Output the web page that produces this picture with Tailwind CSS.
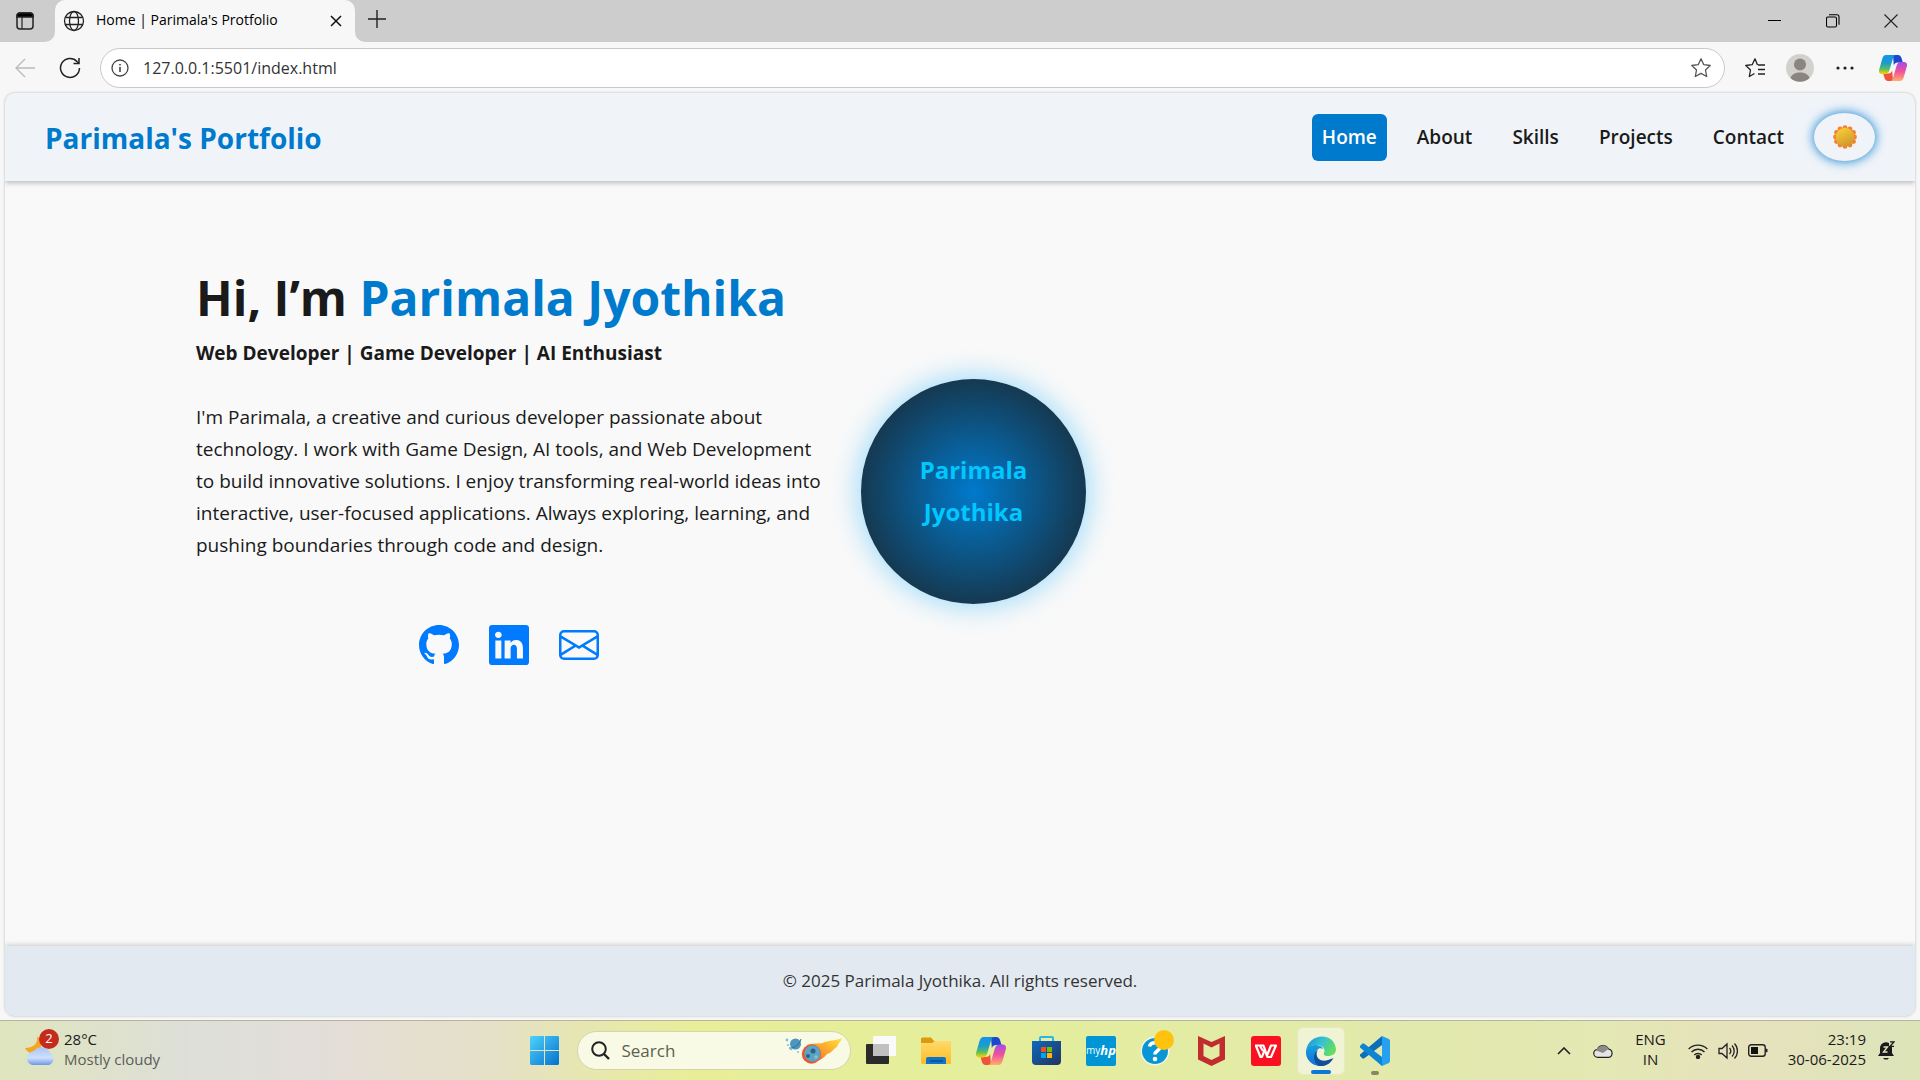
<!DOCTYPE html>
<html lang="en">
<head>
<meta charset="utf-8">
<title>Home | Parimala's Protfolio</title>
<script src="https://cdn.jsdelivr.net/npm/@tailwindcss/browser@4"></script>
</head>
<body class="flex min-h-screen flex-col overflow-hidden bg-[#f7f7f7] font-['Open_Sans',sans-serif] text-[#1a1a1a]">

<svg class="absolute h-0 w-0" aria-hidden="true">
  <defs>
    <linearGradient id="cpA" x1="0" y1="0" x2="0" y2="1"><stop offset="0" stop-color="#1690f0"/><stop offset=".45" stop-color="#1a9fc8"/><stop offset=".75" stop-color="#5fc05a"/><stop offset="1" stop-color="#ffd400"/></linearGradient>
    <linearGradient id="cpB" x1="0" y1="0" x2="0" y2="1"><stop offset="0" stop-color="#a34be8"/><stop offset=".5" stop-color="#f0529c"/><stop offset="1" stop-color="#ffae6b"/></linearGradient>
    <linearGradient id="win" gradientUnits="userSpaceOnUse" x1="0" y1="0" x2="29" y2="29"><stop offset="0" stop-color="#4fd3fb"/><stop offset="1" stop-color="#0471d0"/></linearGradient>
    <linearGradient id="sun" x1="0" y1="0" x2="0.5" y2="1"><stop offset="0" stop-color="#ffd43a"/><stop offset="1" stop-color="#d19a2c"/></linearGradient>
    <linearGradient id="fold" x1="0" y1="0" x2="0" y2="1"><stop offset="0" stop-color="#ffda6b"/><stop offset="1" stop-color="#fdbc22"/></linearGradient>
    <linearGradient id="store" x1="0" y1="0" x2="1" y2="1"><stop offset="0" stop-color="#0b6ac0"/><stop offset="1" stop-color="#24335e"/></linearGradient>
    <linearGradient id="edgeA" x1="0" y1="0" x2="1" y2="0.4"><stop offset="0" stop-color="#1c8fd8"/><stop offset=".55" stop-color="#33c2d4"/><stop offset="1" stop-color="#62dc62"/></linearGradient>
    <linearGradient id="edgeB" x1="0" y1="0" x2="0" y2="1"><stop offset="0" stop-color="#1ba0e0"/><stop offset="1" stop-color="#0c6fd6"/></linearGradient>
    <linearGradient id="fire" x1="0" y1="1" x2="1" y2="0"><stop offset="0" stop-color="#f0522a"/><stop offset=".5" stop-color="#fba22c"/><stop offset="1" stop-color="#ffe53a"/></linearGradient>
    <linearGradient id="cloud" x1="0" y1="0" x2="0" y2="1"><stop offset="0" stop-color="#a9c6f8"/><stop offset=".6" stop-color="#cfe0fb"/><stop offset="1" stop-color="#6c98e6"/></linearGradient>
    <symbol id="copilot" viewBox="0 0 28 26">
      <path d="M14 0h5c2 0 3 1.500 3.500 3l1.300 4.500h-5c-2 0-3.500 1-4 3z" fill="#1a48d0"/>
      <path d="M14 26H9c-2 0-3-1.500-3.500-3L4.200 18.500h5c2 0 3.500-1 4-3z" fill="#f0533c"/>
      <path d="M7 0h10c-1.500 0-2.300 1-2.800 2.600L10.500 15c-.8 2.500-2 4-4.500 4H3c-2.500 0-3.500-2-2.800-4.500L3.200 4C4 1.500 5 0 7 0z" fill="url(#cpA)"/>
      <path d="M21 26H11c1.500 0 2.300-1 2.800-2.600L17.500 11c.8-2.500 2-4 4.500-4h3c2.500 0 3.500 2 2.800 4.500L24.800 22c-.8 2.500-1.800 4-3.800 4z" fill="url(#cpB)"/>
    </symbol>
  </defs>
</svg>

<!-- Browser title bar -->
<div class="flex h-[42px] shrink-0 bg-[#f7f7f7]">
  <button class="flex w-[55px] items-center rounded-br-[10px] bg-[#cdcdcd] pl-4" aria-label="Tab actions">
    <svg class="size-[18px]" viewBox="0 0 18 18" fill="none" stroke="#222" stroke-width="1.500"><rect x="1" y="1" width="16" height="16" rx="3"/><path d="M1 5V4a3 3 0 0 1 3-3h10a3 3 0 0 1 3 3v1z" fill="#000"/><path d="M6 5v12" stroke-width="1.200"/></svg>
  </button>
  <div class="w-[300px] bg-[#cdcdcd]">
    <div class="flex h-full items-center rounded-t-[10px] bg-[#f7f7f7] pr-3 pl-2">
      <svg class="size-[22px]" viewBox="0 0 22 22" fill="none" stroke="#222" stroke-width="1.300"><circle cx="11" cy="11" r="9.500"/><ellipse cx="11" cy="11" rx="4.500" ry="9.500"/><path d="M2.500 7.500h17M2.500 14.500h17"/></svg>
      <span class="ml-[11px] flex-1 pb-[2px] text-sm whitespace-nowrap text-black">Home | Parimala's Protfolio</span>
      <button aria-label="Close tab"><svg class="size-[14px]" viewBox="0 0 14 14" stroke="#111" stroke-width="1.500"><path d="M2 2l10 10M12 2L2 12"/></svg></button>
    </div>
  </div>
  <div class="flex flex-1 items-center rounded-bl-[10px] bg-[#cdcdcd]">
    <button class="mb-1 ml-[13px]" aria-label="New tab"><svg class="size-[18px]" viewBox="0 0 18 18" stroke="#222" stroke-width="1.400"><path d="M9 0v18M0 9h18"/></svg></button>
    <div class="ml-auto flex items-center">
      <button class="flex w-[58px] justify-center" aria-label="Minimize"><svg class="size-[14px]" viewBox="0 0 14 14" stroke="#000" stroke-width="1"><path d="M0 6.500h13"/></svg></button>
      <button class="flex w-[58px] justify-center" aria-label="Restore"><svg class="size-[14px]" viewBox="0 0 14 14" fill="none" stroke="#000" stroke-width="1.100"><rect x=".5" y="3" width="10" height="10" rx="1.500"/><path d="M3 .7h8a2 2 0 0 1 2 2v8"/></svg></button>
      <button class="flex w-[58px] justify-center" aria-label="Close"><svg class="size-[14px]" viewBox="0 0 14 14" stroke="#222" stroke-width="1.100"><path d="M.5.5l13 13M13.500.5l-13 13"/></svg></button>
    </div>
  </div>
</div>

<!-- Address bar -->
<div class="flex h-[51px] shrink-0 items-center pr-[13px] pl-[14px]">
  <button aria-label="Back"><svg class="size-[22px]" viewBox="0 0 22 22" fill="none" stroke="#bbb" stroke-width="1.300"><path d="M21 11H2M11 2L2 11l9 9"/></svg></button>
  <button class="ml-[23px]" aria-label="Refresh"><svg class="size-[22px]" viewBox="0 0 22 22" fill="none" stroke="#222" stroke-width="1.500"><path d="M20.500 11A9.500 9.500 0 1 1 18 4.500l2 2"/><path d="M20 1v5.500h-5.500"/></svg></button>
  <div class="ml-[19px] flex h-10 flex-1 items-center rounded-full border border-[#c9c9c9] bg-white px-[10px]">
    <svg class="size-[18px]" viewBox="0 0 18 18" fill="none" stroke="#444" stroke-width="1.300"><circle cx="9" cy="9" r="8"/><path d="M9 8v5M9 5v1.500" stroke-width="1.600"/></svg>
    <input class="ml-[14px] flex-1 bg-transparent text-base text-[#333] outline-none" aria-label="Address" value="127.0.0.1:5501/index.html">
    <button class="mr-[3px] text-[#555]" aria-label="Add to favorites"><svg class="size-[20px]" viewBox="0 0 20 20" fill="none" stroke="currentColor" stroke-width="1.300" stroke-linejoin="round"><path d="M10 .8l2.800 5.900 6.400.8-4.700 4.500 1.200 6.500L10 15.400l-5.700 3.100L5.500 12 .8 7.500l6.400-.8z"/></svg></button>
  </div>
  <button class="ml-5" aria-label="Favorites"><svg class="size-[20px]" viewBox="0 0 20 20" fill="none" stroke="#222" stroke-width="1.300" stroke-linejoin="round"><path d="M12.500 7L10 .8 7.200 6.700.8 7.500 5.500 12 4.300 18.500 9.500 15.500M13 7h7M13 11.500h7M13 16h7"/></svg></button>
  <button class="ml-[21px]" aria-label="Profile"><svg class="size-7" viewBox="0 0 28 28"><circle cx="14" cy="14" r="14" fill="#d3d1cd"/><circle cx="14" cy="10.500" r="6" fill="#8b8580"/><path d="M4.500 24C6 16.500 22 16.500 23.500 24A14 14 0 0 1 4.500 24z" fill="#8b8580"/></svg></button>
  <button class="ml-[22px]" aria-label="Settings and more"><svg class="h-4 w-[18px]" viewBox="0 0 18 16" fill="#222"><circle cx="2" cy="8" r="1.600"/><circle cx="9" cy="8" r="1.600"/><circle cx="16" cy="8" r="1.600"/></svg></button>
  <button class="ml-[25px]" aria-label="Copilot"><svg class="h-[26px] w-[28px]"><use href="#copilot"/></svg></button>
</div>

<!-- Portfolio page -->
<div class="mx-[5px] mb-1 flex flex-1 flex-col overflow-hidden rounded-[10px] bg-[#f9f9f9] shadow-[0_0_2px_1px_rgba(0,0,0,0.12)]">
  <header class="flex h-[88px] shrink-0 items-center justify-between bg-[#f0f4f9] px-10 shadow-[0_2px_5px_rgba(0,0,0,0.25)]">
    <a href="#" class="pt-[2px] text-[28px] font-bold text-[#007acc]">Parimala's Portfolio</a>
    <nav class="flex items-center gap-5 text-[19px] font-semibold">
      <a href="#" class="flex h-[47px] items-center rounded-md bg-[#007acc] px-[10px] text-white">Home</a>
      <a href="#" class="px-[10px]">About</a>
      <a href="#" class="px-[10px]">Skills</a>
      <a href="#" class="px-[10px]">Projects</a>
      <a href="#" class="px-[10px]">Contact</a>
      <button class="flex h-12 w-[61px] items-center justify-center rounded-[50%] bg-[#f0f4f9] shadow-[0_0_12px_#007acc]" aria-label="Toggle theme">
        <svg class="size-6" viewBox="0 0 24 24"><g fill="#f4812e"><circle cx="12" cy="12" r="9.500"/><circle cx="12" cy="2.600" r="2.400"/><circle cx="17" cy="4" r="2.400"/><circle cx="20.500" cy="7.500" r="2.400"/><circle cx="21.500" cy="12" r="2.400"/><circle cx="20.500" cy="16.500" r="2.400"/><circle cx="17" cy="20" r="2.400"/><circle cx="12" cy="21.400" r="2.400"/><circle cx="7" cy="20" r="2.400"/><circle cx="3.500" cy="16.500" r="2.400"/><circle cx="2.500" cy="12" r="2.400"/><circle cx="3.500" cy="7.500" r="2.400"/><circle cx="7" cy="4" r="2.400"/></g><circle cx="12" cy="12" r="9.300" fill="url(#sun)"/></svg>
      </button>
    </nav>
  </header>

  <main class="flex flex-1 items-start px-[10%] pt-20">
    <div class="flex items-center gap-10">
      <div class="w-[625px] pb-14">
        <h1 class="text-5xl leading-[74px] font-bold whitespace-nowrap">Hi, I’m <span class="text-[#007acc]">Parimala Jyothika</span></h1>
        <h2 class="text-[19px] leading-9 font-bold whitespace-nowrap">Web Developer | Game Developer | AI Enthusiast</h2>
        <p class="mt-[30px] text-[19px] leading-8 whitespace-nowrap">I'm Parimala, a creative and curious developer passionate about<br>technology. I work with Game Design, AI tools, and Web Development<br>to build innovative solutions. I enjoy transforming real-world ideas into<br>interactive, user-focused applications. Always exploring, learning, and<br>pushing boundaries through code and design.</p>
        <div class="mt-16 flex justify-center gap-[30px] text-[#007bff]">
          <a href="#" aria-label="GitHub"><svg class="size-10" viewBox="0 0 16 16" fill="currentColor"><path d="M8 0C3.580 0 0 3.580 0 8c0 3.540 2.290 6.530 5.470 7.590.4.070.550-.170.550-.380 0-.190-.010-.820-.010-1.490-2.010.370-2.530-.490-2.690-.940-.090-.230-.480-.940-.820-1.130-.280-.150-.680-.520-.010-.530.630-.010 1.080.580 1.230.820.720 1.210 1.870.870 2.330.660.070-.520.280-.870.510-1.070-1.780-.2-3.640-.890-3.640-3.950 0-.870.310-1.590.820-2.150-.080-.2-.360-1.020.080-2.120 0 0 .670-.210 2.200.820.640-.180 1.320-.270 2-.270s1.360.090 2 .270c1.530-1.040 2.200-.820 2.200-.820.440 1.100.160 1.920.080 2.120.510.560.820 1.270.820 2.150 0 3.070-1.870 3.750-3.650 3.950.290.250.540.730.540 1.480 0 1.070-.010 1.930-.010 2.200 0 .210.150.460.550.380A8.010 8.010 0 0 0 16 8c0-4.420-3.580-8-8-8"/></svg></a>
          <a href="#" aria-label="LinkedIn"><svg class="size-10" viewBox="0 0 16 16" fill="currentColor"><path d="M0 1.146C0 .513.526 0 1.175 0h13.650C15.474 0 16 .513 16 1.146v13.708c0 .633-.526 1.146-1.175 1.146H1.175C.526 16 0 15.487 0 14.854zm4.943 12.248V6.169H2.542v7.225zm-1.200-8.212c.837 0 1.358-.554 1.358-1.248-.015-.709-.520-1.248-1.342-1.248S2.400 3.226 2.400 3.934c0 .694.521 1.248 1.327 1.248zm4.908 8.212V9.359c0-.216.016-.432.080-.586.173-.431.568-.878 1.232-.878.869 0 1.216.662 1.216 1.634v3.865h2.401V9.250c0-2.220-1.184-3.252-2.764-3.252-1.274 0-1.845.7-2.165 1.193v.025h-.016l.016-.025V6.169h-2.400c.030.678 0 7.225 0 7.225z"/></svg></a>
          <a href="#" aria-label="Email"><svg class="size-10" viewBox="0 0 16 16" fill="currentColor"><path d="M0 4a2 2 0 0 1 2-2h12a2 2 0 0 1 2 2v8a2 2 0 0 1-2 2H2a2 2 0 0 1-2-2zm2-1a1 1 0 0 0-1 1v.217l7 4.200 7-4.200V4a1 1 0 0 0-1-1zm13 2.383-4.708 2.825L15 11.105zm-.034 6.876-5.640-3.471L8 9.583l-1.326-.795-5.640 3.470A1 1 0 0 0 2 13h12a1 1 0 0 0 .966-.741M1 11.105l4.708-2.897L1 5.383z"/></svg></a>
        </div>
      </div>
      <div class="flex size-[225px] items-center justify-center rounded-full bg-[radial-gradient(circle,#007acc,#1e1e1e)] text-center text-2xl leading-[42px] font-bold text-[#00c8ff] shadow-[0_0_30px_rgba(0,170,255,0.45)]">Parimala<br>Jyothika</div>
    </div>
  </main>

  <footer class="flex h-[70px] shrink-0 items-center justify-center bg-[#e2e9f1] text-[17px] text-[#333] shadow-[0_-1px_5px_rgba(0,0,0,0.2)]">© 2025 Parimala Jyothika. All rights reserved.</footer>
</div>

<!-- Taskbar -->
<div class="grid h-[60px] shrink-0 grid-cols-[1fr_auto_1fr] items-center border-t border-[#b5b5a0] bg-[linear-gradient(90deg,#dfe5bd_0%,#dddfd8_10%,#e3ddd8_17%,#e5e1c6_26%,#e8ee98_36%,#e4ee9c_53%,#e2e9ae_75%,#e4e8b4_84%,#e6e2bd_91%,#dce4b8_100%)]">
  <div class="flex items-center pl-6">
    <div class="relative">
      <svg class="h-[38px] w-[36px]" viewBox="0 0 36 38"><path d="M13 5c1 7-4 11-12 11 3 6 11 8 16 3V6z" fill="#f5a623"/><path d="M8 33a7 7 0 0 1-1-13 5 5 0 0 1 3-1 9 8.500 0 0 1 16 2 6.500 6.500 0 0 1-1 12z" fill="url(#cloud)"/></svg>
      <span class="absolute -top-[3px] left-[15px] flex size-5 items-center justify-center rounded-full bg-[#c42b1c] text-[13px] text-white">2</span>
    </div>
    <div class="ml-1 pb-1 text-[15px] leading-5"><div>28°C</div><div class="text-[#5c5c58]">Mostly cloudy</div></div>
  </div>

  <div class="flex items-center">
    <button class="flex w-[54px] justify-center" aria-label="Start"><svg class="size-[29px]" viewBox="0 0 29 29" fill="url(#win)"><path d="M1 0h13v14H0V1zM15 0h13l1 1v13H15zM0 15h14v14H1l-1-1zM15 15h14v13l-1 1H15z"/></svg></button>
    <label class="mr-[3px] ml-[5px] flex h-[39px] w-[274px] items-center rounded-full border border-[#d3d6a8] bg-[#f8fae6] pr-2 pl-[13px]">
      <svg class="size-[19px]" viewBox="0 0 19 19" fill="none" stroke="#222" stroke-width="2"><circle cx="8" cy="8" r="6.800"/><path d="M13 13l5 5" stroke-width="2.400"/></svg>
      <input class="ml-3 w-0 flex-1 bg-transparent text-[17px] outline-none placeholder:text-[#5f604e]" placeholder="Search" aria-label="Search">
      <svg class="h-[27px] w-[57px]" viewBox="0 0 57 27"><circle cx="10.500" cy="7" r="5.500" fill="#4d96bd"/><path d="M4 11c5 1 11-4 12-9" stroke="#2a6c98" fill="none"/><g fill="#7cc0e0"><circle cx="2" cy="3" r="1.400"/><circle cx="3" cy="8" r="1"/><circle cx="6" cy="12" r="1.300"/><circle cx="13" cy="15" r="1"/></g><path d="M22 8C30 5 35 8 40 5 45 3 51 4 57 1 56 5 53 6 52 10 48 12 47 16 42 17 38 22 34 24 26 26z" fill="url(#fire)"/><circle cx="26.500" cy="17" r="9.700" fill="#ee532f"/><circle cx="27.500" cy="16.500" r="8.200" fill="#5aa4c4"/><circle cx="28" cy="14" r="2.500" fill="#2c6386"/><circle cx="23" cy="19" r="2" fill="#2c6386"/><circle cx="31" cy="20" r="1.800" fill="#7fc4dc"/></svg>
    </label>
    <button class="flex w-[55px] justify-center" aria-label="Task view"><svg class="h-[29px] w-[30px]" viewBox="0 0 30 29"><rect y="8" width="23" height="20" rx="1" fill="#2b2b2b"/><rect x="7" width="23" height="20" rx="1" fill="#fafafa"/><path d="M7 8h16v12H8l-1-1z" fill="#c0c0c0"/></svg></button>
    <button class="flex w-[55px] justify-center" aria-label="File Explorer"><svg class="h-[28px] w-[30px]" viewBox="0 0 30 28"><path d="M0 2a1.500 1.500 0 0 1 1.500-1.500H10L13 4h16a1 1 0 0 1 1 1v5H0z" fill="#dc9a0c"/><path d="M0 6h11l3-2h16v23H1l-1-1z" fill="url(#fold)"/><path d="M5 27v-5a2 2 0 0 1 2-2h16a2 2 0 0 1 2 2v5z" fill="#0f74ca"/><path d="M9 24h13" stroke="#094f93" stroke-width="1.500"/></svg></button>
    <button class="flex w-[55px] justify-center" aria-label="Copilot"><svg class="h-[28px] w-[30px]"><use href="#copilot"/></svg></button>
    <button class="flex w-[55px] justify-center" aria-label="Microsoft Store"><svg class="size-[29px]" viewBox="0 0 29 29"><path d="M8 6V2a1 1 0 0 1 1-1h11a1 1 0 0 1 1 1v4" fill="none" stroke="#27b7ec" stroke-width="2"/><path d="M0 5h29v20a4 4 0 0 1-4 4H4a4 4 0 0 1-4-4z" fill="url(#store)"/><path d="M9 11h5v5H9z" fill="#f25022"/><path d="M15 11h5v5h-5z" fill="#7fba00"/><path d="M9 17h5v5H9z" fill="#00a4ef"/><path d="M15 17h5v5h-5z" fill="#ffb900"/></svg></button>
    <button class="flex w-[55px] justify-center" aria-label="myHP"><span class="flex size-[30px] items-center justify-center rounded-xs bg-[#0096d6] text-[10px] text-white">my<b class="text-[13px] italic">hp</b></span></button>
    <button class="flex w-[55px] justify-center" aria-label="HP Support"><svg class="h-[42px] w-[36px]" viewBox="0 0 36 42"><circle cx="17" cy="21" r="14.500" fill="#f4f7e0"/><circle cx="17" cy="21" r="13" fill="#0a96d4"/><path d="M11.500 16.500c1-5 11-5 11 0 0 4-5.500 4-5.500 8" fill="none" stroke="#fff" stroke-width="3.600"/><circle cx="17" cy="29" r="2.300" fill="#fff"/><circle cx="26" cy="10" r="10" fill="#ffc20e"/></svg></button>
    <button class="flex w-[55px] justify-center" aria-label="McAfee"><svg class="h-[30px] w-[27px]" viewBox="0 0 27 30" fill="#c12d2f"><path fill-rule="evenodd" d="M0 0l13.500 6L27 0v23.500L13.500 30 0 23.500zM5.500 7.500v12.500l8 4 8-4V7.500l-8 4z"/></svg></button>
    <button class="flex w-[55px] justify-center" aria-label="WPS Office"><svg class="size-[30px]" viewBox="0 0 30 30"><rect width="30" height="30" rx="3" fill="#fb1022"/><path d="M4 9.500h8.500L16 19.500l4-10h5L20 21h-3.500L13.500 14 11 21H9.500L5 10M9 10l3 5" fill="none" stroke="#fff" stroke-width="2.200" stroke-linejoin="round"/></svg></button>
    <button class="relative mx-[3px] flex h-12 w-[48px] items-center justify-center rounded-md border border-[#e6eac4] bg-[#f1f4d4]" aria-label="Microsoft Edge"><svg class="size-[30px]" viewBox="0 0 30 30"><path d="M0 15C2-3 28-5 30 13c0 5-4 7-8 7-3 0-5-1-4-3 2-4-2-8-7-8C5 9 1 12 0 15z" fill="url(#edgeA)"/><path d="M0 15c1-4 5-6 10-6 3 0 6 1 7 4-4-2-7 1-7 5 0 6 4 11 9 12C8 32-1 24 0 15z" fill="url(#edgeB)"/><path d="M12 14c-4 5 1 13 10 10 2-.5 4-1.500 5.500-2-3 6-9 9-14 8C7 27 6 18 12 14z" fill="#0f4f9c"/></svg><span class="absolute bottom-0 h-1 w-5 rounded-full bg-[#0a78d4]"></span></button>
    <button class="relative flex h-12 w-[55px] items-center justify-center" aria-label="Visual Studio Code"><svg class="size-[30px]" viewBox="0 0 30 30"><path d="M22 0v9L4 22.500 2.500 22.500 0 20v-1.500z" fill="#0a6fb8"/><path d="M22 30v-9L4 7.500 2.500 7.500 0 10v1.500z" fill="#0d84d4"/><path d="M22 0l7 3 1 1.500v21L29 27l-7 3c-1 0 0-1 0-2z" fill="#28a0f2"/></svg><span class="absolute bottom-0 h-1 w-2 rounded-full bg-[#868662]"></span></button>
  </div>

  <div class="flex items-center justify-end pr-[25px]">
    <svg class="h-2 w-[14px]" viewBox="0 0 14 8" fill="none" stroke="#222" stroke-width="1.600"><path d="M1 7l6-6 6 6"/></svg>
    <svg class="ml-[22px] h-[14px] w-5" viewBox="0 0 20 14"><path d="M5 13.300a4 4 0 0 1-.5-8A6 6 0 0 1 15.500 5a4.200 4.200 0 0 1 0 8.300z" fill="#e4e4e4" stroke="#222" stroke-width="1.200"/><path d="M3 6.500C6 0 14 0 15.500 5L10 9z" fill="#8b8b8b"/></svg>
    <div class="ml-[22px] pb-1 text-center text-[15px] leading-5">ENG<br>IN</div>
    <svg class="ml-[22px] h-4 w-5" viewBox="0 0 20 16" fill="none" stroke="#222" stroke-width="1.400"><path d="M.7 6A13 13 0 0 1 19.300 6M3.500 9a9 9 0 0 1 13 0M6.300 12a5.200 5.200 0 0 1 7.400 0"/><circle cx="10" cy="14" r="1.500" fill="#222"/></svg>
    <svg class="ml-[10px] h-[18px] w-5" viewBox="0 0 20 18" fill="none" stroke="#222" stroke-width="1.300"><path d="M1 6.500h3L9 2v14l-5-4.500H1zM11.500 6a4.500 4.500 0 0 1 0 6M14 3.500a8 8 0 0 1 0 11M16.500 1.500a11 11 0 0 1 0 15"/></svg>
    <svg class="ml-[10px] h-[13px] w-5" viewBox="0 0 20 13"><rect x=".7" y=".7" width="16.500" height="11.600" rx="2.500" fill="none" stroke="#222" stroke-width="1.400"/><rect x="3" y="3" width="7" height="7" fill="#111"/><path d="M17.500 4.500l2 .5v3l-2 .5z" fill="#222"/></svg>
    <div class="ml-5 pb-1 text-right text-[15px] leading-5">23:19<br>30-06-2025</div>
    <svg class="ml-3 h-[19px] w-[17px]" viewBox="0 0 17 19"><path d="M2 12V7a6 6 0 0 1 9-5v3h3v7l2 3H0z" fill="#1a1a1a"/><path d="M5 17h6l-1.500 1.500h-3z" fill="#1a1a1a"/><path d="M5.500 6h4l-4 5h4" fill="none" stroke="#e4e4bc" stroke-width="1.400"/><path d="M12 .8h4l-4 4.500h4" fill="none" stroke="#1a1a1a" stroke-width="1.300"/></svg>
  </div>
</div>
</body>
</html>
